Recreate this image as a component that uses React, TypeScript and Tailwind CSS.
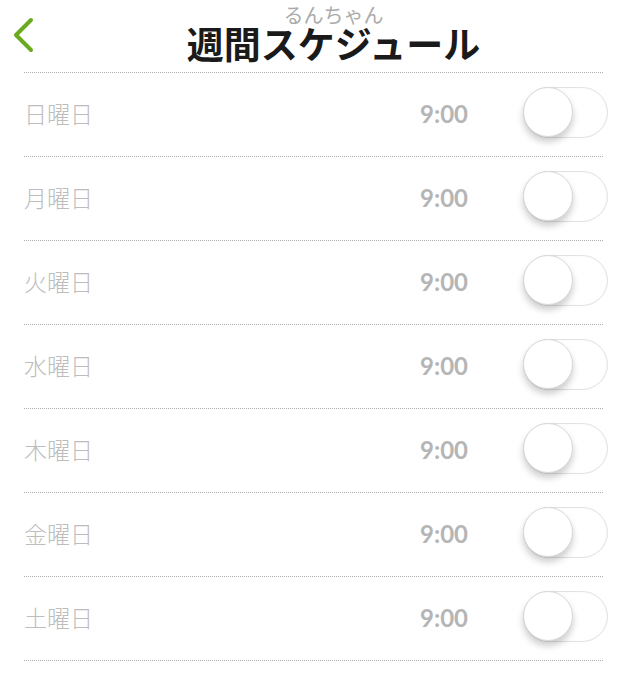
import { useState } from "react";

const days = ["日曜日", "月曜日", "火曜日", "水曜日", "木曜日", "金曜日", "土曜日"];

function Toggle({ on, onChange }: { on: boolean; onChange: () => void }) {
  return (
    <button
      type="button"
      onClick={onChange}
      className={`relative w-[85px] h-[51px] rounded-full border border-[#e2e2e2] shadow-[inset_0_0_2px_rgba(0,0,0,0.06)] transition-colors ${
        on ? "bg-[#6aaa1e] border-[#6aaa1e]" : "bg-white"
      }`}
    >
      <span
        className={`absolute top-[-1px] left-[-1px] w-[50px] h-[50px] rounded-full bg-white border border-[#d8d8d8] shadow-[0_5px_7px_rgba(0,0,0,0.2)] transition-transform ${
          on ? "translate-x-[35px]" : ""
        }`}
      />
    </button>
  );
}

export default function App() {
  const [enabled, setEnabled] = useState<boolean[]>(days.map(() => false));

  const toggle = (i: number) => {
    setEnabled((prev) => prev.map((v, j) => (j === i ? !v : v)));
  };

  return (
    <div className="w-[627px] h-[677px] bg-white overflow-hidden font-['Noto_Sans_CJK_JP',sans-serif]">
      {/* header */}
      <div className="flex h-[72px]">
        <button type="button" className="w-[40px] pl-[11px] pt-[17px] self-start">
          <svg width="24" height="36" viewBox="0 0 24 36" fill="none">
            <path
              d="M20 3 L5 18 L20 33"
              stroke="#6aaa1e"
              strokeWidth="4"
              strokeLinecap="round"
              strokeLinejoin="round"
            />
          </svg>
        </button>
        <div className="flex-1 flex flex-col items-center pt-[5px]">
          <span className="text-[20px] leading-[20px] text-[#ababab]">るんちゃん</span>
          <h1 className="text-[37px] leading-[40px] font-bold text-[#1a1a1a] -mt-[2px]">
            週間スケジュール
          </h1>
        </div>
      </div>

      {/* week list */}
      <ul className="mx-[24px] border-t border-dotted border-[#b0b0b0]">
        {days.map((d, i) => (
          <li
            key={d}
            className="flex items-center h-[84px] border-b border-dotted border-[#b0b0b0]"
          >
            <span className="flex-1 text-[23px] leading-[30px] font-light text-[#bdbdbd] -mt-[4px]">
              {d}
            </span>
            <span className="font-['Lato',sans-serif] font-bold text-[24px] leading-[30px] text-[#b5b5b5] mr-[55px] -mt-[1px]">
              9:00
            </span>
            <div className="-mr-[5px]">
              <Toggle on={enabled[i]} onChange={() => toggle(i)} />
            </div>
          </li>
        ))}
      </ul>
    </div>
  );
}
